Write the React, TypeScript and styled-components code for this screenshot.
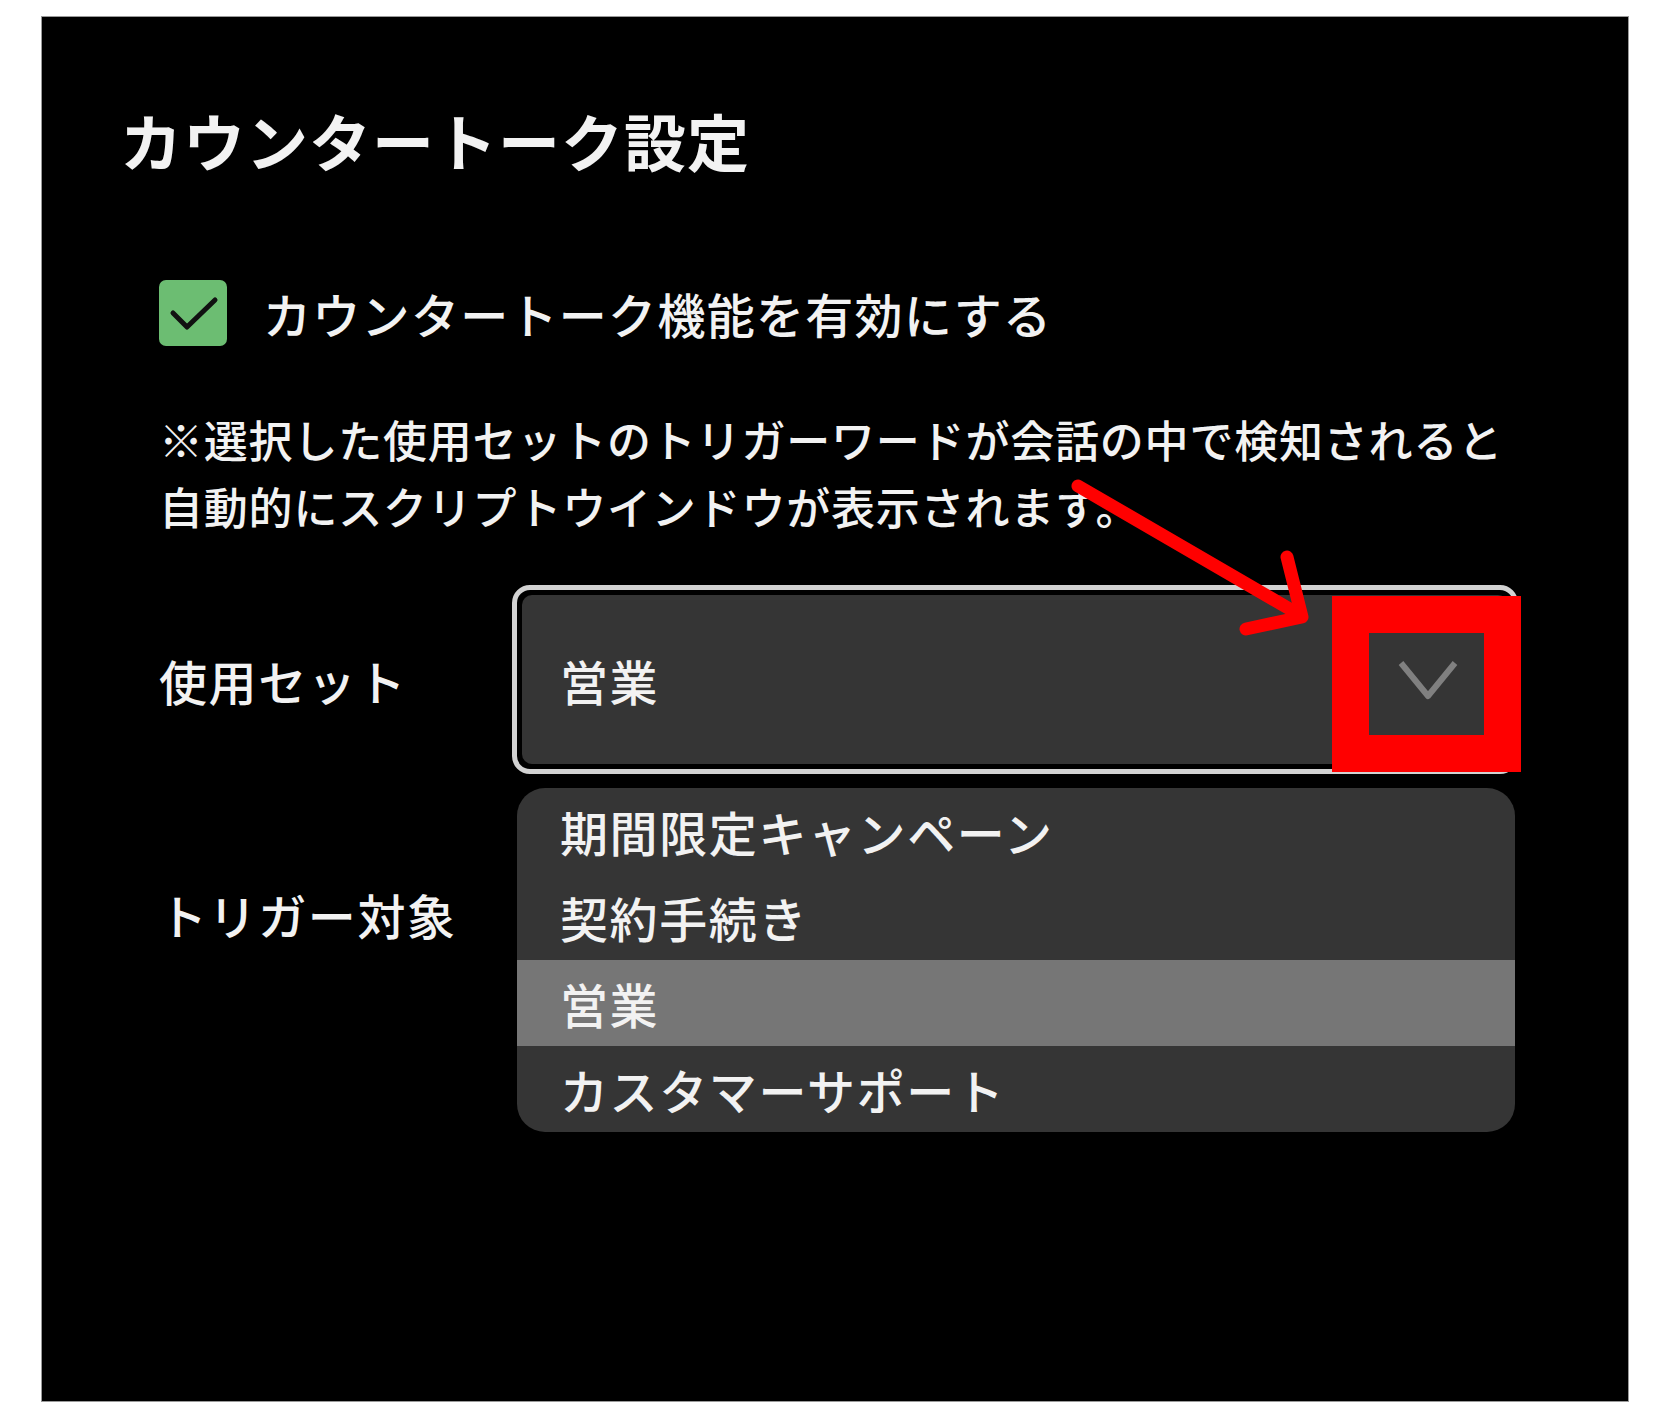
import React from 'react';
import styled, { createGlobalStyle } from 'styled-components';

const GlobalStyle = createGlobalStyle`
  html, body {
    margin: 0;
    padding: 0;
    background: #ffffff;
  }
  body {
    font-family: "Noto Sans CJK JP", "Noto Sans", sans-serif;
  }
`;

const Panel = styled.div`
  position: relative;
  box-sizing: border-box;
  width: 1588px;
  height: 1386px;
  margin: 16px 0 0 41px;
  padding: 92px 0 0 78px;
  background: #000;
  border: 1px solid #9a9a9a;
  color: #f2f2f2;
`;

const Title = styled.h1`
  margin: 0;
  font-size: 62px;
  line-height: 62px;
  font-weight: 700;
  letter-spacing: 1px;
`;

const Body = styled.div`
  margin-left: 39px;
`;

const CheckRow = styled.label`
  display: flex;
  align-items: center;
  gap: 36px;
  height: 66px;
  margin-top: 109px;
`;

const CheckBox = styled.span<{ $checked: boolean }>`
  display: flex;
  align-items: center;
  justify-content: center;
  width: 68px;
  height: 66px;
  border-radius: 7px;
  background: ${p => (p.$checked ? '#6cbd72' : '#353535')};
`;

const CheckText = styled.span`
  font-size: 48px;
  line-height: 66px;
  font-weight: 500;
  letter-spacing: 1.3px;
`;

const Note = styled.p`
  margin: 60px 0 0;
  font-size: 44px;
  line-height: 67px;
  font-weight: 500;
  letter-spacing: 0.8px;
`;

const FormRow = styled.div<{ $top: number; $height: number }>`
  display: flex;
  align-items: center;
  margin-top: ${p => p.$top}px;
  height: ${p => p.$height}px;
`;

const FieldLabel = styled.span<{ $indent?: number }>`
  flex: 0 0 353px;
  padding-left: ${p => p.$indent || 0}px;
  box-sizing: border-box;
  font-size: 48px;
  line-height: 60px;
  font-weight: 500;
  letter-spacing: 1.6px;
`;

const SelectWrap = styled.div`
  position: relative;
  flex: 0 0 1006px;
  height: 100%;
`;

const SelectBox = styled.div`
  box-sizing: border-box;
  height: 100%;
  padding: 5px;
  border: 5px solid #d2d2d2;
  border-radius: 18px;
  background: #000;
`;

const SelectFace = styled.div`
  display: flex;
  align-items: center;
  justify-content: space-between;
  height: 100%;
  padding: 0 50px 0 38px;
  border-radius: 10px;
  background: #353535;
  font-size: 48px;
  font-weight: 500;
  letter-spacing: 1.6px;
`;

const OptionList = styled.ul`
  position: absolute;
  left: 5px;
  top: 203px;
  width: 998px;
  margin: 0;
  padding: 0;
  list-style: none;
  border-radius: 28px;
  overflow: hidden;
  background: #353535;
  z-index: 2;
`;

const Option = styled.li<{ $active: boolean }>`
  display: flex;
  align-items: center;
  height: 86px;
  padding-left: 43px;
  font-size: 48px;
  font-weight: 500;
  letter-spacing: 1.6px;
  background: ${p => (p.$active ? '#767676' : 'transparent')};
`;

const RedBox = styled.div`
  position: absolute;
  left: 820px;
  top: 11px;
  width: 189px;
  height: 176px;
  box-sizing: border-box;
  border: 37px solid #ff0000;
  z-index: 3;
`;

const Arrow = styled.svg`
  position: absolute;
  left: 540px;
  top: -120px;
  overflow: visible;
  z-index: 3;
`;

const options = ['期間限定キャンペーン', '契約手続き', '営業', 'カスタマーサポート'];

export default function App() {
  const selected = '営業';

  return (
    <>
      <GlobalStyle />
      <Panel>
        <Title>カウンタートーク設定</Title>
        <Body>
          <CheckRow>
            <CheckBox $checked>
              <svg width="66" height="66" viewBox="0 0 66 66">
                <path d="M13 33 L27 47 L55 20" fill="none" stroke="#111" strokeWidth="5" strokeLinecap="round" strokeLinejoin="round" />
              </svg>
            </CheckBox>
            <CheckText>カウンタートーク機能を有効にする</CheckText>
          </CheckRow>
          <Note>
            ※選択した使用セットのトリガーワードが会話の中で検知されると
            <br />
            自動的にスクリプトウインドウが表示されます。
          </Note>
          <FormRow $top={45} $height={189}>
            <FieldLabel>使用セット</FieldLabel>
            <SelectWrap>
              <SelectBox>
                <SelectFace>
                  <span>{selected}</span>
                  <svg width="60" height="42" viewBox="0 0 60 42">
                    <path d="M3 4 L30 37 L57 4" fill="none" stroke="#808080" strokeWidth="6" strokeLinejoin="round" />
                  </svg>
                </SelectFace>
              </SelectBox>
              <OptionList>
                {options.map(o => (
                  <Option key={o} $active={o === selected}>{o}</Option>
                ))}
              </OptionList>
              <RedBox />
              <Arrow width="280" height="180" viewBox="0 0 280 180">
                <g fill="none" stroke="#ff0000" strokeWidth="13" strokeLinecap="round" strokeLinejoin="round">
                  <path d="M26 21 L248 150" />
                  <path d="M235 92 L250 152 L194 164" />
                </g>
              </Arrow>
            </SelectWrap>
          </FormRow>
          <FormRow $top={90} $height={100}>
            <FieldLabel>トリガー対象</FieldLabel>
          </FormRow>
        </Body>
      </Panel>
    </>
  );
}
